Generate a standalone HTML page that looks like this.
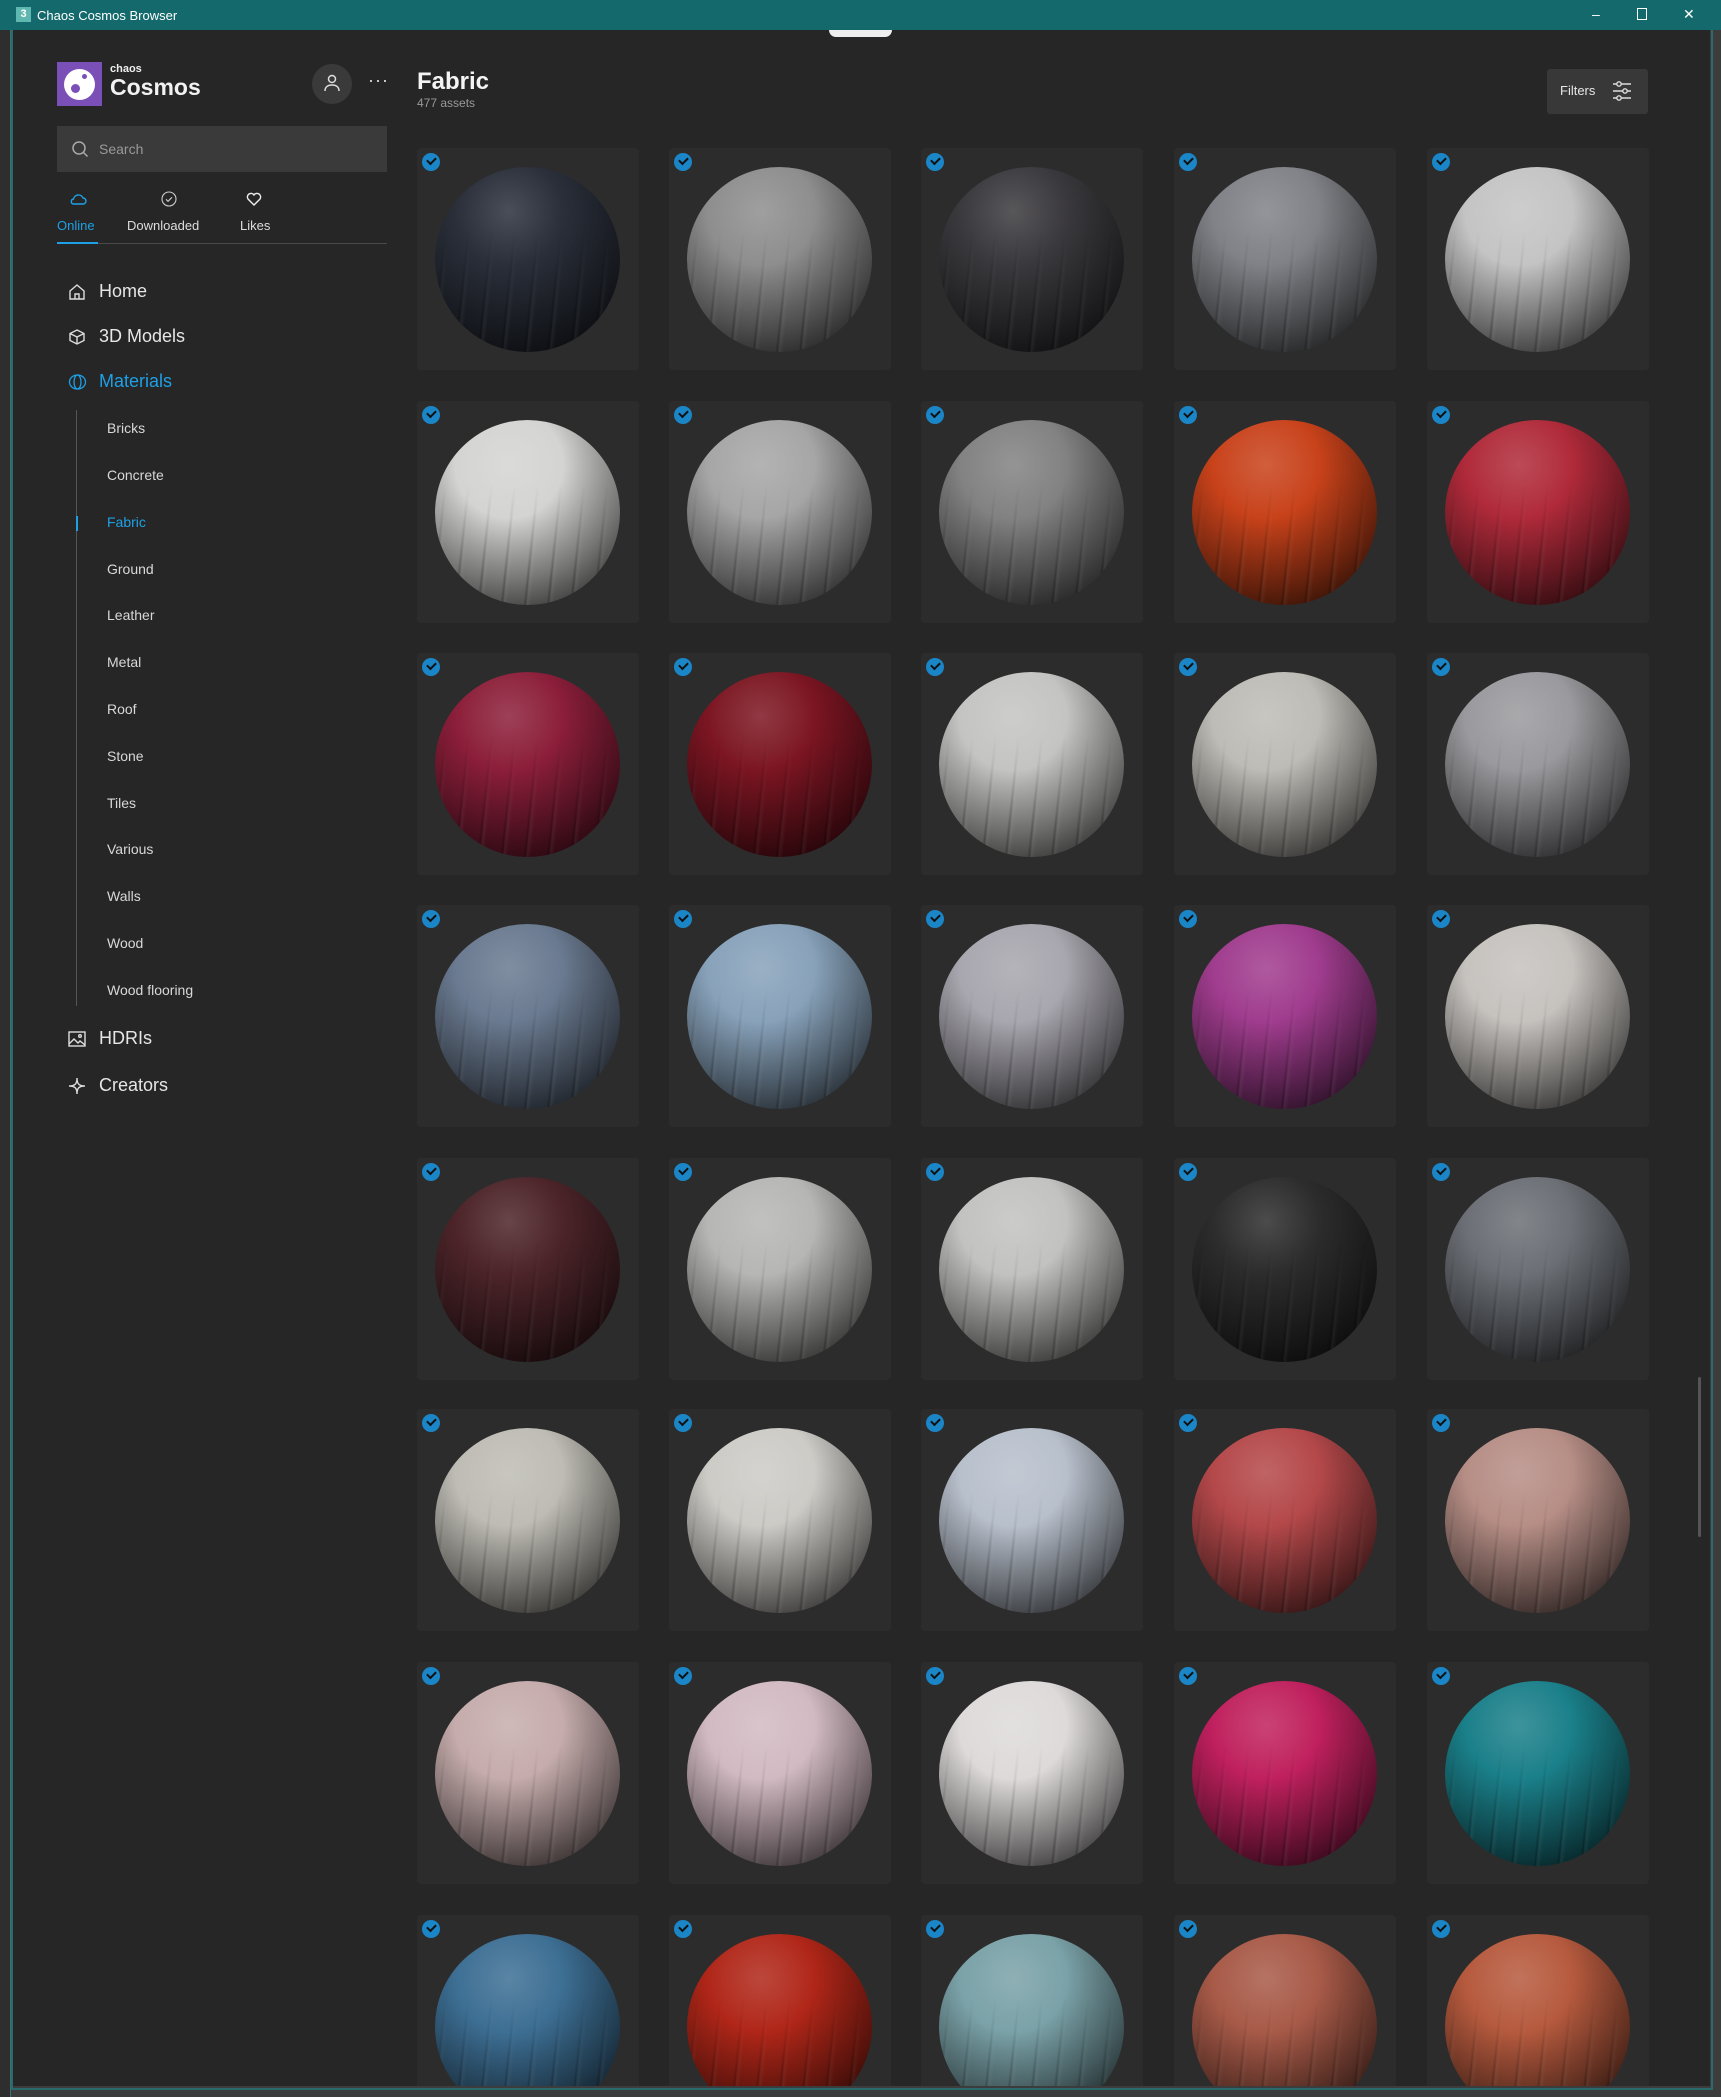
<!DOCTYPE html>
<html><head><meta charset="utf-8"><style>
*{box-sizing:border-box;margin:0;padding:0}
body{width:1721px;height:2097px;background:#3c3c3c;font-family:"Liberation Sans",sans-serif;position:relative;overflow:hidden}
.tb{position:absolute;left:0;top:0;width:1721px;height:30px;background:#13696b;color:#fff;font-size:13px}
.tb .t{position:absolute;left:37px;top:8px}
.tb .ic{position:absolute;left:16px;top:7px;width:15px;height:15px;background:#5fb8b0;color:#fff;font-size:11px;font-weight:bold;text-align:center;line-height:15px}
.tb .c{position:absolute;top:6px;font-size:14px}
.lstrip{position:absolute;left:0;top:30px;width:11px;height:2067px;background:#2e2e2e;border-right:1px solid #3a7070}
.app{position:absolute;left:12px;top:30px;width:1698px;height:2056px;background:#262626;overflow:hidden}
.bord{position:absolute;left:11px;top:30px;width:1702px;height:2060px;border:2px solid #2a6a6d;border-top:none}
.a{position:absolute}
.nav{position:absolute;left:87px;color:#e6e6e6;font-size:18px}
.navi{position:absolute;left:56px}
.sub{position:absolute;left:95px;color:#d8d8d8;font-size:14px}
.card{position:absolute;width:222px;height:222px;background:#2c2c2c;border-radius:4px}
.sph{position:absolute;left:18px;top:19px;width:185px;height:185px;border-radius:50%;
background:radial-gradient(circle at 40% 24%, color-mix(in srgb,var(--c),white 15%) 0%, var(--c) 30%, color-mix(in srgb,var(--c),black 45%) 65%, color-mix(in srgb,var(--c),black 88%) 100%);overflow:hidden}
.sph::after{content:"";position:absolute;inset:0;border-radius:50%;
background:repeating-linear-gradient(96deg,rgba(0,0,0,0) 0 15px,rgba(0,0,0,.22) 17px,rgba(255,255,255,.05) 19px,rgba(0,0,0,0) 23px);
-webkit-mask-image:linear-gradient(180deg,transparent 35%,#000 85%)}
.chk{position:absolute;left:5px;top:5px;width:18px;height:18px;border-radius:50%;background:#1a86c7}
.chk::after{content:"";position:absolute;left:5px;top:4px;width:7px;height:4px;border-left:2.5px solid #111;border-bottom:2.5px solid #111;transform:rotate(-45deg)}
</style></head><body>
<div class="tb"><div class="ic">3</div><div class="t">Chaos Cosmos Browser</div>
<div class="c" style="left:1592px">&#8211;</div><div class="c" style="left:1637px;top:5px;width:10px;height:12px;border:1.5px solid #fff;margin-top:3px"></div><div class="c" style="left:1683px">&#10005;</div></div>
<div class="lstrip"></div>
<div class="app">
<div class="a" style="left:817px;top:0;width:63px;height:7px;background:#eee;border-radius:0 0 10px 10px"></div>
<div class="a" style="left:45px;top:32px;width:45px;height:44px;background:#7a4fb8"></div>
<div class="a" style="left:52px;top:39px;width:31px;height:31px;border-radius:50%;background:#fff"></div>
<div class="a" style="left:59px;top:54px;width:9px;height:9px;border-radius:50%;background:#7a4fb8"></div>
<div class="a" style="left:70px;top:44px;width:5px;height:5px;border-radius:50%;background:#7a4fb8"></div>
<div class="a" style="left:98px;top:33px;color:#eee;font-size:11px;font-weight:bold">chaos</div>
<div class="a" style="left:98px;top:44px;color:#f2f2f2;font-size:23px;font-weight:bold">Cosmos</div>
<div class="a" style="left:300px;top:34px;width:40px;height:40px;border-radius:50%;background:#3a3a3a"></div>
<svg class="a" style="left:310px;top:43px" width="20" height="20" viewBox="0 0 20 20" fill="none" stroke="#ddd" stroke-width="1.5"><circle cx="10" cy="6" r="3.5"/><path d="M3 18c0-4 3-6 7-6s7 2 7 6"/></svg>
<div class="a" style="left:356px;top:40px;color:#ddd;font-size:18px;letter-spacing:1px">&#183;&#183;&#183;</div>
<div class="a" style="left:45px;top:96px;width:330px;height:46px;background:#3a3a3a"></div>
<svg class="a" style="left:59px;top:110px" width="18" height="18" viewBox="0 0 18 18" fill="none" stroke="#aaa" stroke-width="1.5"><circle cx="8" cy="8" r="6"/><path d="M12.5 12.5l4 4"/></svg>
<div class="a" style="left:87px;top:111px;color:#999;font-size:14px">Search</div>
<svg class="a" style="left:57px;top:162px" width="18" height="14" viewBox="0 0 18 14" fill="none" stroke="#1ea0e6" stroke-width="1.4"><path d="M4 12h10a3 3 0 0 0 0-6 5 5 0 0 0-9.5 1A2.6 2.6 0 0 0 4 12z"/></svg>
<div class="a" style="left:45px;top:188px;color:#1ea0e6;font-size:13px">Online</div>
<svg class="a" style="left:149px;top:161px" width="16" height="16" viewBox="0 0 16 16" fill="none" stroke="#ccc" stroke-width="1.1"><circle cx="8" cy="8" r="7"/><path d="M5 8.3l2 2 4-4"/></svg>
<div class="a" style="left:115px;top:188px;color:#ddd;font-size:13px">Downloaded</div>
<svg class="a" style="left:234px;top:162px" width="16" height="14" viewBox="0 0 16 14" fill="none" stroke="#eee" stroke-width="1.4"><path d="M8 13L2 7a3.3 3.3 0 0 1 6-4 3.3 3.3 0 0 1 6 4z"/></svg>
<div class="a" style="left:228px;top:188px;color:#ddd;font-size:13px">Likes</div>
<div class="a" style="left:45px;top:213px;width:330px;height:1px;background:#4a4a4a"></div>
<div class="a" style="left:45px;top:212px;width:41px;height:2px;background:#1ea0e6"></div>
<svg class="navi" style="top:253px" width="18" height="18" viewBox="0 0 18 18" fill="none" stroke="#ddd" stroke-width="1.4"><path d="M2 8l7-6 7 6v8H2z"/><path d="M7 16v-5h4v5"/></svg>
<div class="nav" style="top:251px">Home</div>
<svg class="navi" style="top:298px" width="18" height="18" viewBox="0 0 18 18" fill="none" stroke="#ddd" stroke-width="1.4"><path d="M9 2l7 3.5v7L9 16l-7-3.5v-7z"/><path d="M2 5.5L9 9l7-3.5M9 9v7"/></svg>
<div class="nav" style="top:296px">3D Models</div>
<svg class="navi" style="top:343px" width="19" height="18" viewBox="0 0 19 18" fill="none" stroke="#1ea0e6" stroke-width="1.3"><ellipse cx="9.5" cy="9" rx="8" ry="7"/><ellipse cx="9.5" cy="9" rx="3.5" ry="7"/></svg>
<div class="nav" style="top:341px;color:#1ea0e6">Materials</div>
<div class="a" style="left:64px;top:380px;width:1px;height:596px;background:#555"></div>
<div class="a" style="left:64px;top:486px;width:2px;height:15px;background:#1ea0e6"></div>
<div class="sub" style="top:390px">Bricks</div>
<div class="sub" style="top:437px">Concrete</div>
<div class="sub" style="top:484px;color:#1ea0e6">Fabric</div>
<div class="sub" style="top:531px">Ground</div>
<div class="sub" style="top:577px">Leather</div>
<div class="sub" style="top:624px">Metal</div>
<div class="sub" style="top:671px">Roof</div>
<div class="sub" style="top:718px">Stone</div>
<div class="sub" style="top:765px">Tiles</div>
<div class="sub" style="top:811px">Various</div>
<div class="sub" style="top:858px">Walls</div>
<div class="sub" style="top:905px">Wood</div>
<div class="sub" style="top:952px">Wood flooring</div>
<svg class="navi" style="top:1001px" width="18" height="16" viewBox="0 0 18 16" fill="none" stroke="#ddd" stroke-width="1.4"><rect x="1" y="1" width="16" height="14"/><path d="M1 13l5-5 4 4 2-2 5 4"/><circle cx="12" cy="5" r="1.3"/></svg>
<div class="nav" style="top:998px">HDRIs</div>
<svg class="navi" style="top:1047px" width="18" height="18" viewBox="0 0 18 18" fill="none" stroke="#ddd" stroke-width="1.4"><path d="M9 1C9 7 7 9 1 9c6 0 8 2 8 8 0-6 2-8 8-8-6 0-8-2-8-8z"/></svg>
<div class="nav" style="top:1045px">Creators</div>
<div class="a" style="left:405px;top:38px;color:#f4f4f4;font-size:24px;font-weight:bold">Fabric</div>
<div class="a" style="left:405px;top:66px;color:#999;font-size:12px">477 assets</div>
<div class="a" style="left:1535px;top:39px;width:101px;height:45px;background:#383838;border-radius:3px"></div>
<div class="a" style="left:1548px;top:53px;color:#e6e6e6;font-size:13px">Filters</div>
<svg class="a" style="left:1600px;top:50px" width="20" height="22" viewBox="0 0 20 22" fill="none" stroke="#ddd" stroke-width="1.4"><path d="M1 4h18M1 11h18M1 18h18"/><circle cx="7" cy="4" r="2.2" fill="#383838"/><circle cx="13" cy="11" r="2.2" fill="#383838"/><circle cx="7" cy="18" r="2.2" fill="#383838"/></svg>
<div class="a" style="left:1686px;top:1347px;width:3px;height:160px;background:#555;border-radius:2px"></div>
<div class="card" style="left:405px;top:118px"><div class="sph" style="--c:#2a2f3a"></div><div class="chk"></div></div>
<div class="card" style="left:657px;top:118px"><div class="sph" style="--c:#8e8e8e"></div><div class="chk"></div></div>
<div class="card" style="left:909px;top:118px"><div class="sph" style="--c:#3a393d"></div><div class="chk"></div></div>
<div class="card" style="left:1162px;top:118px"><div class="sph" style="--c:#808287"></div><div class="chk"></div></div>
<div class="card" style="left:1415px;top:118px"><div class="sph" style="--c:#c4c4c4"></div><div class="chk"></div></div>

<div class="card" style="left:405px;top:371px"><div class="sph" style="--c:#d4d4d2"></div><div class="chk"></div></div>
<div class="card" style="left:657px;top:371px"><div class="sph" style="--c:#a6a6a6"></div><div class="chk"></div></div>
<div class="card" style="left:909px;top:371px"><div class="sph" style="--c:#828282"></div><div class="chk"></div></div>
<div class="card" style="left:1162px;top:371px"><div class="sph" style="--c:#c8421a"></div><div class="chk"></div></div>
<div class="card" style="left:1415px;top:371px"><div class="sph" style="--c:#b02a3a"></div><div class="chk"></div></div>

<div class="card" style="left:405px;top:623px"><div class="sph" style="--c:#8c1e3a"></div><div class="chk"></div></div>
<div class="card" style="left:657px;top:623px"><div class="sph" style="--c:#7c1522"></div><div class="chk"></div></div>
<div class="card" style="left:909px;top:623px"><div class="sph" style="--c:#c4c4c2"></div><div class="chk"></div></div>
<div class="card" style="left:1162px;top:623px"><div class="sph" style="--c:#bebcb6"></div><div class="chk"></div></div>
<div class="card" style="left:1415px;top:623px"><div class="sph" style="--c:#9a9a9e"></div><div class="chk"></div></div>

<div class="card" style="left:405px;top:875px"><div class="sph" style="--c:#6a7a90"></div><div class="chk"></div></div>
<div class="card" style="left:657px;top:875px"><div class="sph" style="--c:#88a2ba"></div><div class="chk"></div></div>
<div class="card" style="left:909px;top:875px"><div class="sph" style="--c:#a8a6ae"></div><div class="chk"></div></div>
<div class="card" style="left:1162px;top:875px"><div class="sph" style="--c:#a03c8e"></div><div class="chk"></div></div>
<div class="card" style="left:1415px;top:875px"><div class="sph" style="--c:#c6c2be"></div><div class="chk"></div></div>

<div class="card" style="left:405px;top:1128px"><div class="sph" style="--c:#4c2429"></div><div class="chk"></div></div>
<div class="card" style="left:657px;top:1128px"><div class="sph" style="--c:#b6b6b4"></div><div class="chk"></div></div>
<div class="card" style="left:909px;top:1128px"><div class="sph" style="--c:#c2c2c0"></div><div class="chk"></div></div>
<div class="card" style="left:1162px;top:1128px"><div class="sph" style="--c:#2c2c2c"></div><div class="chk"></div></div>
<div class="card" style="left:1415px;top:1128px"><div class="sph" style="--c:#6c7076"></div><div class="chk"></div></div>

<div class="card" style="left:405px;top:1379px"><div class="sph" style="--c:#bebcb4"></div><div class="chk"></div></div>
<div class="card" style="left:657px;top:1379px"><div class="sph" style="--c:#cdcbc6"></div><div class="chk"></div></div>
<div class="card" style="left:909px;top:1379px"><div class="sph" style="--c:#b8c0cc"></div><div class="chk"></div></div>
<div class="card" style="left:1162px;top:1379px"><div class="sph" style="--c:#b4484a"></div><div class="chk"></div></div>
<div class="card" style="left:1415px;top:1379px"><div class="sph" style="--c:#b68e86"></div><div class="chk"></div></div>

<div class="card" style="left:405px;top:1632px"><div class="sph" style="--c:#c6acac"></div><div class="chk"></div></div>
<div class="card" style="left:657px;top:1632px"><div class="sph" style="--c:#d2bac2"></div><div class="chk"></div></div>
<div class="card" style="left:909px;top:1632px"><div class="sph" style="--c:#dedada"></div><div class="chk"></div></div>
<div class="card" style="left:1162px;top:1632px"><div class="sph" style="--c:#c0205e"></div><div class="chk"></div></div>
<div class="card" style="left:1415px;top:1632px"><div class="sph" style="--c:#1a808a"></div><div class="chk"></div></div>

<div class="card" style="left:405px;top:1885px"><div class="sph" style="--c:#3d6f94"></div><div class="chk"></div></div>
<div class="card" style="left:657px;top:1885px"><div class="sph" style="--c:#b02618"></div><div class="chk"></div></div>
<div class="card" style="left:909px;top:1885px"><div class="sph" style="--c:#7aa2a8"></div><div class="chk"></div></div>
<div class="card" style="left:1162px;top:1885px"><div class="sph" style="--c:#a85a48"></div><div class="chk"></div></div>
<div class="card" style="left:1415px;top:1885px"><div class="sph" style="--c:#b65a3e"></div><div class="chk"></div></div>
</div>
<div class="bord"></div>
</body></html>
